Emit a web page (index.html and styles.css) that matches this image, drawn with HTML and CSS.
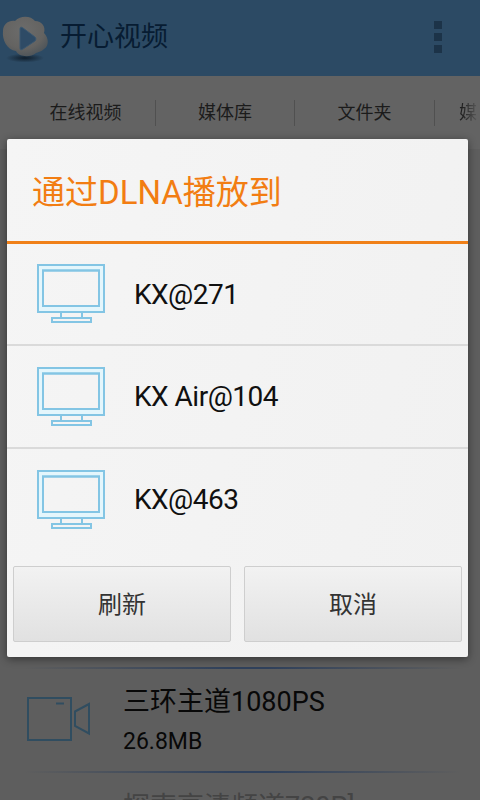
FILE: index.html
```html
<!DOCTYPE html>
<html lang="zh-CN">
<head>
<meta charset="utf-8">
<title>开心视频</title>
<link rel="stylesheet" href="styles.css">
</head>
<body>
<svg class="defs" width="0" height="0" aria-hidden="true">
  <symbol id="tv" viewBox="0 0 70 62">
    <path class="tv-frame" fill-rule="evenodd" d="M2 2h66v47h-66zM7 7.500h56v35.500h-56z"/>
    <path d="M2 2h66v47h-66zM7 7.500h56v35.500h-56zM25 49v6M46 49v6M16 55h39v4h-39z"/>
  </symbol>
</svg>
<div class="screen">
  <header class="bar">
    <svg class="logo" width="50" height="50" viewBox="0 0 50 50">
      <defs>
        <radialGradient id="cloud" cx=".45" cy=".35" r=".65"><stop offset="0" stop-color="#6c6c6b"/><stop offset=".7" stop-color="#646361"/><stop offset="1" stop-color="#50565a"/></radialGradient>
        <radialGradient id="shade"><stop offset="0" stop-color="#101e2b"/><stop offset="1" stop-color="#101e2b" stop-opacity="0"/></radialGradient>
      </defs>
      <ellipse cx="24" cy="43" rx="19" ry="4.500" fill="url(#shade)"/>
      <path d="M2 16C2 9 8 5 14 6C20 0 30 1 34 6C41 6 45 12 43 18C48 23 48 31 43 34C40 37 37 37 35 38C29 43 18 42 15 36C6 35 1 25 2 16Z" fill="url(#cloud)"/>
      <path d="M19 14Q19 11 22 13L34 22Q36 24 34 26L22 34Q19 36 19 33Z" fill="#2e4b66" stroke="#3c5870"/>
    </svg>
    <h1>开心视频</h1>
    <div class="more"><i></i><i></i><i></i></div>
  </header>
  <nav class="tabs">
    <span>在线视频</span><span>媒体库</span><span>文件夹</span><span class="last">媒</span>
  </nav>
  <main class="videos">
    <div class="video">
      <svg class="camera" width="64" height="45" viewBox="0 0 64 45"><path d="M1 1h43v42H1zM29 6.500h8M48 14.500l14-7.500v29.500l-14-7.500z"/></svg>
      <div><p class="name">三环主道1080PS</p><p class="size">26.8MB</p></div>
    </div>
    <div class="video next"><p class="name">探索高清频道720P]</p></div>
  </main>
  <section class="dialog">
    <h2>通过DLNA播放到</h2>
    <ul>
      <li><svg class="tv"><use href="#tv"/></svg><span>KX@271</span></li>
      <li><svg class="tv"><use href="#tv"/></svg><span>KX Air@104</span></li>
      <li><svg class="tv"><use href="#tv"/></svg><span>KX@463</span></li>
    </ul>
    <div class="actions"><button>刷新</button><button>取消</button></div>
  </section>
</div>
</body>
</html>
```
FILE: styles.css
```css
* { box-sizing: border-box; }
body, h1, h2, p, ul { margin: 0; padding: 0; }
body { font-family: Roboto, "Noto Sans CJK SC", sans-serif; }
.defs { position: absolute; }
.screen { position: relative; width: 480px; height: 800px; overflow: hidden; background: #5e5e5e; display: flex; flex-direction: column; }
.bar { height: 76px; flex: none; background: #2c4a64; display: flex; align-items: center; padding: 0 38px 3px 1px; }
.logo { margin-top: 6px; }
h1 { margin-left: 9px; margin-top: 1px; font-size: 27px; font-weight: 400; color: #071c32; line-height: 40px; }
.more { margin-left: auto; display: grid; gap: 4px; }
.more i { width: 8px; height: 8px; background: #1c3348; }
.tabs { height: 73px; flex: none; background: #636363; display: grid; grid-template-columns: 140px 139px 140px 45px; padding-left: 16px; align-items: center; font-size: 18px; color: #1b1b1b; }
.tabs span { height: 26px; line-height: 26px; text-align: center; border-right: 1px solid #505050; }
.tabs .last { border: 0; text-align: left; padding-left: 24px; overflow: hidden; color: transparent; background: linear-gradient(90deg, #202020 60%, #626262); background-clip: text; -webkit-background-clip: text; }
.videos { margin-top: auto; height: 133px; flex: none; overflow: hidden; }
.video { height: 104px; display: flex; padding: 18px 0 0 27px; background: linear-gradient(90deg, transparent 5%, #30415b 48%, #30415b 56%, transparent 96%) 0 0 / 100% 2px no-repeat; color: #080808; }
.camera { margin-top: 12px; margin-right: 32px; fill: none; stroke: #304d60; stroke-width: 2; }
.name { font-size: 27px; line-height: 34px; white-space: nowrap; }
.size { font-size: 23px; line-height: 30px; margin-top: 8px; }
.next { padding: 19px 0 0 123px; }
.next .name { color: #444; }
.dialog { position: absolute; left: 7px; top: 139px; width: 461px; height: 518px; border-radius: 2px; background: linear-gradient(105deg, #f5f5f5, #f1f1f1); box-shadow: 0 2px 9px rgba(0,0,0,.45); display: flex; flex-direction: column; }
h2 { height: 105px; flex: none; border-bottom: 3px solid #f08018; padding: 2px 0 0 25px; font-size: 33px; line-height: 104px; font-weight: 400; color: #f27d12; }
ul { list-style: none; }
li { height: 102px; display: flex; align-items: center; border-bottom: 2px solid #dadada; padding-left: 29px; font-size: 28px; letter-spacing: -.5px; color: #101010; }
li:nth-child(2) { height: 103px; }
li:last-child { border: 0; height: 101px; }
.tv { width: 70px; height: 62px; margin-right: 28px; fill: none; stroke: #83c5e4; stroke-width: 2; }
.tv .tv-frame, .tv-frame { fill: #e4f6fc; }
.actions { margin-top: auto; padding: 0 6px 15px; display: grid; grid-template-columns: 218px 218px; gap: 13px; }
button { height: 76px; padding: 0 0 3px; border: 1px solid #cecece; border-radius: 2px; background: linear-gradient(#f2f2f2, #e1e1e1); font: 24px Roboto, "Noto Sans CJK SC", sans-serif; color: #333; }
```
